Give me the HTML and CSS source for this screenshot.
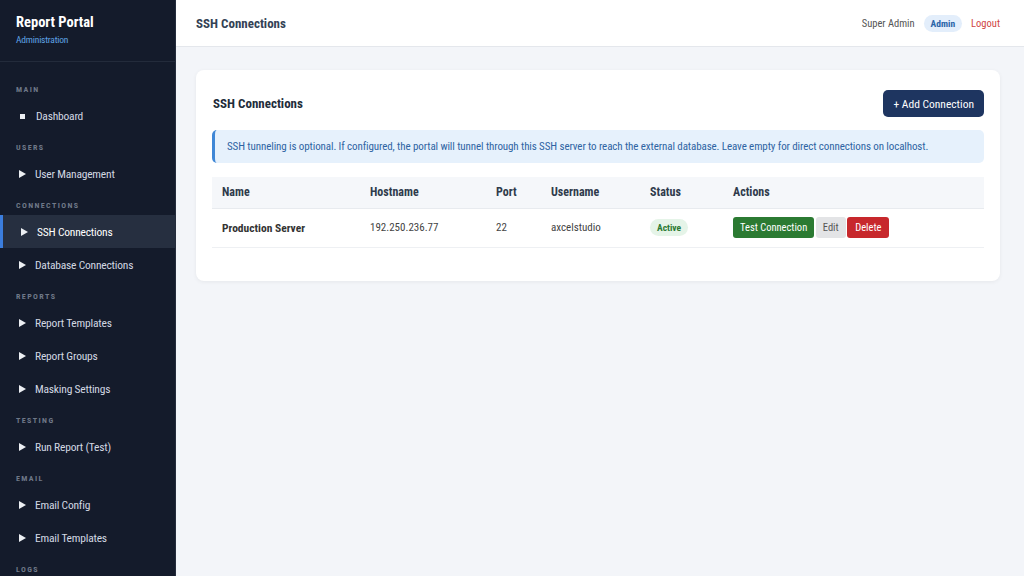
FILE: index.html
```html
<!DOCTYPE html>
<html lang="en">
<head>
  <meta charset="UTF-8" />
  <meta name="viewport" content="width=device-width, initial-scale=1.0"/>
  <title>SSH Connections - Report Portal</title>
  <link rel="stylesheet" href="styles.css">
</head>
<body>
  <div class="layout">
    <aside class="sidebar">
      <div class="brand">
        <h1>Report Portal</h1>
        <span>Administration</span>
      </div>
      <nav class="nav">
        <div class="nav-label">Main</div>
        <a class="nav-item"><span class="bullet square"></span>Dashboard</a>

        <div class="nav-label">Users</div>
        <a class="nav-item"><span class="bullet"></span>User Management</a>

        <div class="nav-label">Connections</div>
        <a class="nav-item active"><span class="bullet"></span>SSH Connections</a>
        <a class="nav-item"><span class="bullet"></span>Database Connections</a>

        <div class="nav-label">Reports</div>
        <a class="nav-item"><span class="bullet"></span>Report Templates</a>
        <a class="nav-item"><span class="bullet"></span>Report Groups</a>
        <a class="nav-item"><span class="bullet"></span>Masking Settings</a>

        <div class="nav-label">Testing</div>
        <a class="nav-item"><span class="bullet"></span>Run Report (Test)</a>

        <div class="nav-label">Email</div>
        <a class="nav-item"><span class="bullet"></span>Email Config</a>
        <a class="nav-item"><span class="bullet"></span>Email Templates</a>

        <div class="nav-label">Logs</div>
      </nav>
    </aside>

    <div class="main">
      <header class="topbar">
        <h2>SSH Connections</h2>
        <div class="user-box">
          <span class="user-name">Super Admin</span>
          <span class="role-badge">Admin</span>
          <a class="logout">Logout</a>
        </div>
      </header>

      <section class="content">
        <div class="card">
          <div class="card-head">
            <h3>SSH Connections</h3>
            <button class="btn btn-primary">+ Add Connection</button>
          </div>

          <div class="info-box">
            SSH tunneling is optional. If configured, the portal will tunnel through this SSH server to reach the external database. Leave empty for direct connections on localhost.
          </div>

          <table class="data-table">
            <thead>
              <tr>
                <th class="col-name">Name</th>
                <th class="col-host">Hostname</th>
                <th class="col-port">Port</th>
                <th class="col-user">Username</th>
                <th class="col-status">Status</th>
                <th>Actions</th>
              </tr>
            </thead>
            <tbody>
              <tr>
                <td class="strong">Production Server</td>
                <td>192.250.236.77</td>
                <td>22</td>
                <td>axcelstudio</td>
                <td><span class="status active">Active</span></td>
                <td class="actions">
                  <button class="btn btn-sm btn-success">Test Connection</button>
                  <button class="btn btn-sm btn-light">Edit</button>
                  <button class="btn btn-sm btn-danger">Delete</button>
                </td>
              </tr>
            </tbody>
          </table>
        </div>
      </section>
    </div>
  </div>
</body>
</html>
```

FILE: styles.css
```css
* { box-sizing: border-box; }
body {
  margin: 0; padding: 0;
  font-family: "Roboto Condensed", "Liberation Sans Narrow", Roboto, "Liberation Sans", Arial, sans-serif;
  font-size: 12px;
  color: #333;
  background: #f3f5f9;
  overflow: hidden;
}
.layout {
  display: flex;
  height: 100vh;
}

/* sidebar */
.sidebar {
  width: 176px;
  flex-shrink: 0;
  background: #141b2b;
  color: #cfd6e0;
  border-right: 1px solid #252d3d;
  overflow: hidden;
}
.brand {
  padding: 15px 16px 0;
  border-bottom: 1px solid #232b3b;
  height: 62px;
}
.brand h1 {
  margin: 0;
  font-size: 14.5px;
  line-height: 16px;
  font-weight: bold;
  color: #fff;
}
.brand span {
  display: block;
  margin-top: 3px;
  font-size: 9.5px;
  letter-spacing: -0.2px;
  color: #5fa3e6;
}
.nav {
  padding-top: 22px;
}
.nav-label {
  padding: 0 16px;
  margin-bottom: 4px;
  font-size: 8px;
  font-weight: bold;
  text-transform: uppercase;
  letter-spacing: 1.4px;
  color: #6f7888;
  height: 11px;
  line-height: 11px;
}
.nav-item + .nav-label { margin-top: 10px; }
.nav-item {
  display: flex;
  align-items: center;
  height: 33px;
  padding-left: 19px;
  font-size: 11.5px;
  letter-spacing: -0.2px;
  color: #d2d8e2;
}
.nav-item .bullet {
  width: 0;
  height: 0;
  margin-right: 9px;
  border-top: 4.5px solid transparent;
  border-bottom: 4.5px solid transparent;
  border-left: 7px solid #eceff3;
}
.nav-item .bullet.square {
  width: 5px;
  height: 5px;
  margin: 2px 11px 0 1px;
  border: none;
  background: #eceff3;
}
.nav-item.active {
  background: #262f40;
  border-left: 3px solid #3b7ddd;
  padding-left: 18px;
  color: #fff;
}

/* main */
.main {
  flex: 1;
  display: flex;
  flex-direction: column;
  min-width: 0;
}
.topbar {
  height: 47px;
  background: #fff;
  border-bottom: 1px solid #e4e7ec;
  display: flex;
  align-items: center;
  justify-content: space-between;
  padding: 0 24px 0 20px;
}
.topbar h2 {
  margin: 0;
  font-size: 13px;
  font-weight: bold;
  color: #344255;
}
.user-box {
  display: flex;
  align-items: center;
  gap: 9px;
  font-size: 10.5px;
}
.user-name { color: #555; }
.role-badge {
  background: #e3eefb;
  color: #2a64a8;
  font-size: 9.5px;
  font-weight: bold;
  padding: 3px 7px;
  border-radius: 10px;
}
.logout { color: #d0453f; }

.content {
  padding: 23px 24px 20px 20px;
}
.card {
  background: #fff;
  border-radius: 8px;
  box-shadow: 0 1px 4px rgba(0,0,0,0.06);
  padding: 20px 16px 33px 16px;
}
.card-head {
  display: flex;
  justify-content: space-between;
  align-items: center;
  padding-left: 1px;
}
.card-head h3 {
  margin: 0;
  font-size: 13px;
  font-weight: bold;
  color: #222c3a;
}

.btn {
  border: none;
  border-radius: 5px;
  font-family: inherit;
  cursor: pointer;
  color: #fff;
}
.btn-primary {
  background: #1e3560;
  height: 27px;
  padding: 0 10px;
  font-size: 11.5px;
}
.btn-sm {
  height: 21px;
  padding: 0 7px;
  font-size: 10.5px;
  border-radius: 3px;
}
.actions .btn + .btn { margin-left: -1px; }
.btn-success { background: #2b7a32; }
.btn-light { background: #e3e4e6; color: #555; }
.btn-danger { background: #c7282c; padding: 0 8px; }

.info-box {
  margin-top: 13px;
  background: #e6f1fc;
  border-left: 3px solid #3f87d6;
  border-radius: 5px;
  padding: 10px 12px;
  font-size: 11px;
  letter-spacing: -0.1px;
  color: #2e64a3;
  white-space: nowrap;
}

.data-table {
  width: 100%;
  margin-top: 14px;
  border-collapse: collapse;
}
.data-table th {
  background: #f5f7fa;
  text-align: left;
  font-size: 12px;
  font-weight: bold;
  color: #2f3b4c;
  height: 31px;
  padding: 0 10px;
  border-bottom: 1px solid #e8ebef;
}
.data-table td {
  height: 39px;
  padding: 0 10px;
  font-size: 11px;
  color: #444;
  border-bottom: 1px solid #eef0f3;
}
.data-table td.strong { font-size: 11.5px; font-weight: bold; color: #333; }
.col-name { width: 148px; }
.col-host { width: 126px; }
.col-port { width: 55px; }
.col-user { width: 99px; }
.col-status { width: 83px; }
.status {
  display: inline-block;
  font-size: 9.5px;
  font-weight: bold;
  padding: 3px 7px;
  border-radius: 9px;
}
.status.active { background: #e5f4e8; color: #2b7a32; }
```
